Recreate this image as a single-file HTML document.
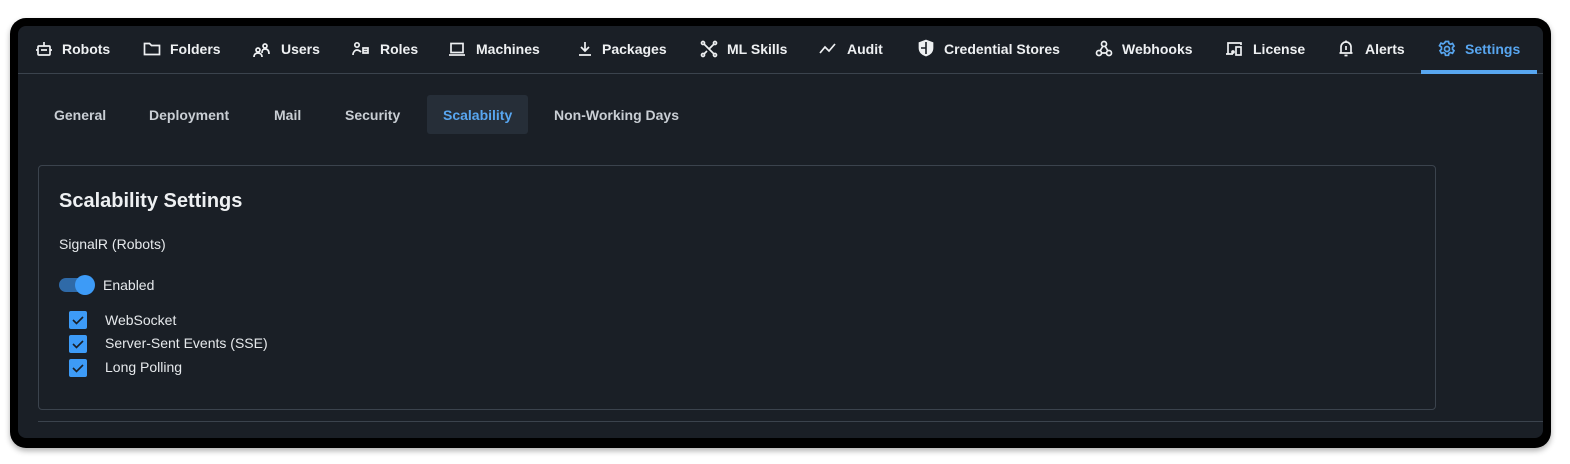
<!DOCTYPE html>
<html><head><meta charset="utf-8"><style>
*{margin:0;padding:0;box-sizing:border-box}
body{width:1570px;height:464px;background:#fff;position:relative;overflow:hidden;font-family:"Liberation Sans",sans-serif}
.frame{position:absolute;left:10px;top:18px;width:1541px;height:430px;background:#000;border-radius:16px;box-shadow:0 3px 6px rgba(0,0,0,.3)}
.panel{position:absolute;left:18px;top:26px;width:1525px;height:412px;background:#1a1f26;border-radius:8px;overflow:hidden}
.t{position:absolute;color:#eef0f2;font-weight:bold;font-size:14px;line-height:18px;white-space:nowrap}
.ic{position:absolute;width:18px;height:18px}
.ic *{fill:none;stroke:#eef0f2;stroke-width:1.7}
.s{position:absolute;color:#c9ced4;font-weight:bold;font-size:14px;top:106px;line-height:18px}
.lbl{position:absolute;color:#e6e9ec;font-size:14px;line-height:18px}
.cb{position:absolute;left:69px;width:18px;height:18px;background:#3d9bf7;border-radius:2px}
</style></head><body>
<div class="frame"></div>
<div class="panel"></div>
<!-- nav separator -->
<div style="position:absolute;left:18px;top:73px;width:1525px;height:1px;background:#3b434d"></div>
<div style="position:absolute;left:1421px;top:70px;width:116px;height:4px;background:#58a6f0"></div>

<svg class="ic" style="left:35px;top:40px" viewBox="0 0 18 18"><rect x="3" y="6" width="12" height="9" rx="1"/><path d="M9 2v4M6 10h6M1 10h2M15 10h2"/></svg><div class="t" style="left:62px;top:40px">Robots</div>
<svg class="ic" style="left:143px;top:40px" viewBox="0 0 18 18"><path d="M1.5 3.5h5l2 2h8v9h-15z"/></svg><div class="t" style="left:170px;top:40px">Folders</div>
<svg class="ic" style="left:253px;top:41px" viewBox="0 0 18 18"><circle cx="5" cy="9" r="2"/><circle cx="12" cy="5" r="2"/><path d="M1 16c0-3 2-4 4-4s4 1 4 4M9 12c0-3 1-4 3-4s4 1 4 5"/></svg><div class="t" style="left:281px;top:40px">Users</div>
<svg class="ic" style="left:352px;top:40px" viewBox="0 0 18 18"><circle cx="5" cy="5" r="2.2"/><path d="M1 15c0-3 2-5 4-5s3 1 4 2M11 8h5v5h-5zM11 10.5h5"/></svg><div class="t" style="left:380px;top:40px">Roles</div>
<svg class="ic" style="left:448px;top:40px" viewBox="0 0 18 18"><rect x="3" y="3.5" width="12" height="9"/><path d="M1 15h16"/></svg><div class="t" style="left:476px;top:40px">Machines</div>
<svg class="ic" style="left:576px;top:40px" viewBox="0 0 18 18"><path d="M9 2v9M5 7l4 4 4-4M3 15h12"/></svg><div class="t" style="left:602px;top:40px">Packages</div>
<svg class="ic" style="left:700px;top:40px" viewBox="0 0 18 18"><circle cx="3" cy="3" r="1.5"/><circle cx="15" cy="3" r="1.5"/><circle cx="3" cy="15" r="1.5"/><circle cx="15" cy="15" r="1.5"/><path d="M4 4l10 10M14 4L9 9M4 14l3-3"/></svg><div class="t" style="left:727px;top:40px">ML Skills</div>
<svg class="ic" style="left:819px;top:40px" viewBox="0 0 18 18"><path d="M1 13l5-6 4 4 6-7" stroke-width="2.2"/></svg><div class="t" style="left:847px;top:40px">Audit</div>
<svg class="ic" style="left:917px;top:39px" viewBox="0 0 18 18"><path d="M9 1.5l6.5 2.5v5c0 4-3 6.5-6.5 7.5C5.5 15.5 2.5 13 2.5 9V4z" style="fill:#eef0f2"/><path d="M9 3v12M4 9h5" style="stroke:#1a1f26;stroke-width:1.6"/></svg><div class="t" style="left:944px;top:40px">Credential Stores</div>
<svg class="ic" style="left:1095px;top:40px" viewBox="0 0 18 18"><circle cx="9" cy="4" r="2.5"/><circle cx="4" cy="13" r="2.5"/><circle cx="14" cy="13" r="2.5"/><path d="M8 6l-3 5M6.5 13h5M10 6l3 5"/></svg><div class="t" style="left:1122px;top:40px">Webhooks</div>
<svg class="ic" style="left:1225px;top:40px" viewBox="0 0 18 18"><path d="M3 14V3h13v2M1 14h7"/><rect x="11" y="7" width="5" height="8"/><circle cx="8" cy="12" r="1"/></svg><div class="t" style="left:1253px;top:40px">License</div>
<svg class="ic" style="left:1337px;top:39px" viewBox="0 0 18 18"><path d="M4 14V8a5 5 0 0110 0v6zM2.5 14h13M9 1.5v1.5M7.5 16.5h3M9 7v4"/></svg><div class="t" style="left:1365px;top:40px">Alerts</div>
<svg class="ic" style="left:1438px;top:40px" viewBox="0 0 18 18"><circle cx="9" cy="9" r="2.5" style="stroke:#58a6f0"/><path d="M7.5 1.5h3l.5 2 1.5.8 2-.8 1.5 2.6-1.5 1.4v1.8l1.5 1.4-1.5 2.6-2-.8-1.5.8-.5 2h-3l-.5-2-1.5-.8-2 .8-1.5-2.6 1.5-1.4V7.1L1.5 5.7 3 3.1l2 .8 1.5-.8z" style="stroke:#58a6f0"/></svg><div class="t" style="left:1465px;top:40px;color:#58a6f0">Settings</div>

<div style="position:absolute;left:427px;top:95px;width:101px;height:39px;background:#262e38;border-radius:3px"></div>
<div class="s" style="left:54px">General</div>
<div class="s" style="left:149px">Deployment</div>
<div class="s" style="left:274px">Mail</div>
<div class="s" style="left:345px">Security</div>
<div class="s" style="left:443px;color:#58a6f0">Scalability</div>
<div class="s" style="left:554px">Non-Working Days</div>

<div style="position:absolute;left:38px;top:165px;width:1398px;height:245px;border:1px solid #3b434d;border-radius:4px"></div>
<div style="position:absolute;left:38px;top:421px;width:1505px;height:1px;background:#3b434d"></div>
<div class="lbl" style="left:59px;top:189px;font-size:20px;line-height:24px;font-weight:bold;color:#eef0f2">Scalability Settings</div>
<div class="lbl" style="left:59px;top:235px">SignalR (Robots)</div>
<div style="position:absolute;left:59px;top:278px;width:34px;height:14px;border-radius:7px;background:#2f6aa8"></div>
<div style="position:absolute;left:75px;top:275px;width:20px;height:20px;border-radius:50%;background:#3d9bf7"></div>
<div class="lbl" style="left:103px;top:276px">Enabled</div>
<div class="cb" style="top:311px"></div><div class="lbl" style="left:105px;top:311px">WebSocket</div>
<div class="cb" style="top:335px"></div><div class="lbl" style="left:105px;top:334px">Server-Sent Events (SSE)</div>
<div class="cb" style="top:359px"></div><div class="lbl" style="left:105px;top:358px">Long Polling</div>
<svg style="position:absolute;left:69px;top:311px" width="18" height="66" viewBox="0 0 18 66"><g fill="none" stroke="#1a1f26" stroke-width="1.6"><path d="M4 9l3.5 3.5L14 6"/><path d="M4 33l3.5 3.5L14 30"/><path d="M4 57l3.5 3.5L14 54"/></g></svg>
</body></html>
